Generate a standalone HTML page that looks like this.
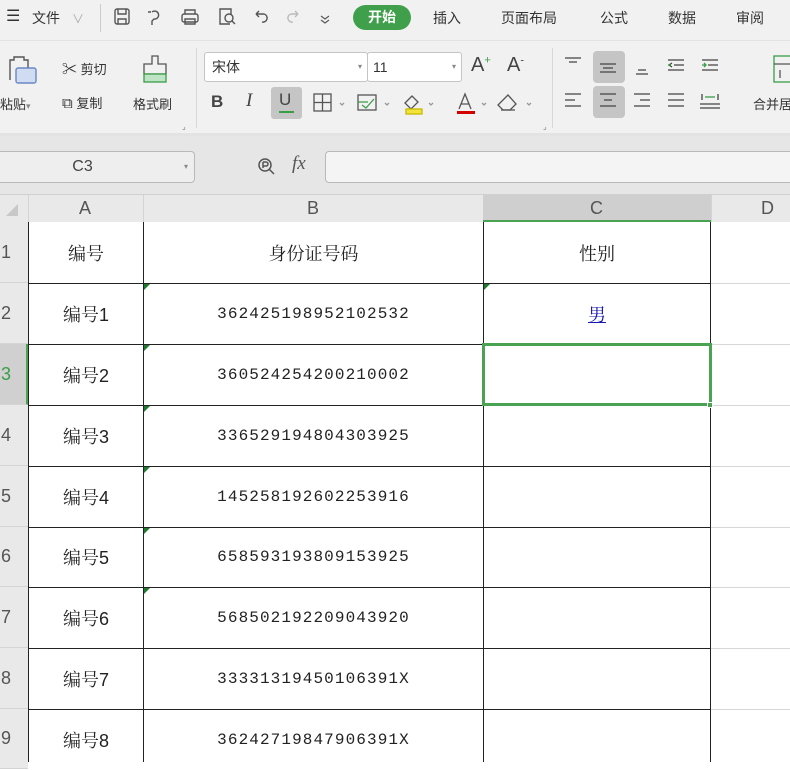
<!DOCTYPE html>
<html><head><meta charset="utf-8"><style>
*{margin:0;padding:0;box-sizing:border-box}
body{width:790px;height:761px;overflow:hidden;background:#fff;font-family:"Liberation Sans","Noto Sans CJK SC",sans-serif;position:relative;color:#333}
.a{position:absolute;white-space:nowrap}
.tab{position:absolute;top:8px;font-size:14px;color:#333}
.ic{position:absolute}
.t13{font-size:13px;color:#333}
.grid div{position:absolute}
.cell{display:flex;align-items:center;justify-content:center;font-size:18px;color:#222;font-family:"Liberation Sans","Noto Serif CJK SC",serif}
.num{font-family:"Liberation Mono",monospace;font-size:16px;letter-spacing:1.1px}
.rh{position:absolute;left:0;width:28px;background:#e9e9e9;border-bottom:1px solid #d4d4d4;font-size:18px;color:#555;display:flex;align-items:center;padding-left:1px}
.tri{position:absolute;width:0;height:0;border-top:6px solid #1e7a2e;border-right:6px solid transparent}
</style></head><body>
<div class="a" style="left:0;top:0;width:790px;height:135px;background:#f1f1f1"></div>
<div class="a" style="left:0;top:40px;width:790px;height:1px;background:#e2e2e2"></div>
<div class="a" style="left:0;top:133px;width:790px;height:3px;background:#e3e3e3"></div>
<div class="tab" style="left:6px;top:6px;font-size:16px">☰</div>
<div class="tab" style="left:32px">文件</div>
<div class="tab" style="left:72px;color:#aaa;font-size:12px;top:10px">∨</div>
<div class="a" style="left:100px;top:4px;width:1px;height:28px;background:#ccc"></div>
<svg class="ic" style="left:112px;top:6px" width="240" height="22" viewBox="0 0 240 22" fill="none" stroke="#555" stroke-width="1.4">
<rect x="3" y="3" width="14" height="15" rx="2"/><path d="M6 3v5h8V3M6 18v-5h8v5"/>
<path d="M40 6a4 4 0 1 1 2 7l-2 2v4M36 6h3"/>
<rect x="70" y="8" width="16" height="8" rx="2"/><path d="M73 8V4h10v4M73 13h10v5H73z"/>
<path d="M118 3h-10v15h10M110 3h9v6"/><circle cx="117" cy="12" r="4"/><path d="M120 15l3 3"/>
<path d="M144 8h8a4 4 0 1 1-2 8M144 8l3-3M144 8l3 3"/>
<path stroke="#bbb" d="M186 8h-7a4 4 0 1 0 2 8M186 8l-3-3M186 8l-3 3"/>
<path d="M209 10l4 3 4-3M209 14l4 3 4-3" stroke-width="1.1"/>
</svg>
<div class="a" style="left:353px;top:5px;width:58px;height:25px;border-radius:13px;background:#3f9f4a;color:#fff;font-size:14px;font-weight:bold;text-align:center;line-height:25px">开始</div>
<div class="tab" style="left:433px">插入</div>
<div class="tab" style="left:501px">页面布局</div>
<div class="tab" style="left:600px">公式</div>
<div class="tab" style="left:668px">数据</div>
<div class="tab" style="left:736px">审阅</div>
<svg class="ic" style="left:4px;top:52px" width="36" height="36" viewBox="0 0 36 36" fill="none" stroke="#555" stroke-width="1.4"><path d="M6 28V8h4V5h10v3h4v8"/><rect x="12" y="16" width="20" height="15" rx="2" fill="#cfdcf2" stroke="#6a88c6"/></svg>
<div class="a t13" style="left:0;top:94px">粘贴<span style="font-size:9px;color:#888">▾</span></div>
<div class="a t13" style="left:62px;top:58px"><span style="font-size:15px">✂</span> 剪切</div>
<div class="a t13" style="left:62px;top:93px"><span style="font-size:15px">⧉</span> 复制</div>
<svg class="ic" style="left:140px;top:52px" width="30" height="36" viewBox="0 0 30 36" fill="none" stroke="#555" stroke-width="1.3"><path d="M12 4h6v8h8v10H4V12h8z"/><rect x="4" y="22" width="22" height="8" fill="#bfe3c5" stroke="#3a9d48"/></svg>
<div class="a t13" style="left:133px;top:94px">格式刷</div>
<div class="a" style="left:182px;top:122px;font-size:8px;color:#777">⌟</div>
<div class="a" style="left:196px;top:48px;width:1px;height:80px;background:#d8d8d8"></div>
<div class="a" style="left:204px;top:52px;width:164px;height:30px;border:1px solid #c4c4c4;border-radius:3px;background:#fff;font-size:14px;line-height:28px;padding-left:7px">宋体<span style="position:absolute;right:5px;font-size:8px;color:#888">▾</span></div>
<div class="a" style="left:367px;top:52px;width:95px;height:30px;border:1px solid #c4c4c4;border-radius:3px;background:#fff;font-size:14px;line-height:28px;padding-left:5px">11<span style="position:absolute;right:5px;font-size:8px;color:#888">▾</span></div>
<div class="a" style="left:471px;top:54px;font-size:20px;color:#444">A<sup style="font-size:11px;color:#3a9d48">+</sup></div>
<div class="a" style="left:507px;top:54px;font-size:20px;color:#444">A<sup style="font-size:11px">-</sup></div>
<div class="a" style="left:211px;top:92px;font-size:17px;font-weight:bold;color:#444">B</div>
<div class="a" style="left:246px;top:90px;font-size:19px;font-style:italic;font-family:'Liberation Serif',serif;color:#444">I</div>
<div class="a" style="left:271px;top:87px;width:31px;height:32px;background:#c5c5c5;border-radius:3px"></div>
<div class="a" style="left:279px;top:90px;font-size:17px;color:#444">U</div>
<div class="a" style="left:279px;top:111px;width:15px;height:2px;background:#3a9d48"></div>
<svg class="ic" style="left:312px;top:90px" width="230" height="28" viewBox="0 0 230 28" fill="none" stroke="#555" stroke-width="1.3">
<rect x="2" y="4" width="17" height="17"/><path d="M2 12.5h17M10.5 4v17"/><path d="M28 13l2 2 2-2" stroke="#999"/>
<rect x="46" y="5" width="18" height="15"/><path d="M46 12h10M50 15l4 3 8-9" stroke="#3a9d48"/><path d="M73 13l2 2 2-2" stroke="#999"/>
<path d="M100 6l-7 7 6 6 7-7z"/><rect x="94" y="19" width="16" height="5" fill="#f1e43c" stroke="#c8b900"/><path d="M117 13l2 2 2-2" stroke="#999"/>
<path d="M147 19l6-15 6 15M149 14h8"/><rect x="145" y="21" width="18" height="3" fill="#d40000" stroke="none"/><path d="M170 13l2 2 2-2" stroke="#999"/>
<path d="M196 5l-10 10 5 5h7l6-6z"/><path d="M189 20h14"/><path d="M215 13l2 2 2-2" stroke="#999"/>
</svg>
<div class="a" style="left:543px;top:122px;font-size:8px;color:#777">⌟</div>
<div class="a" style="left:552px;top:48px;width:1px;height:80px;background:#d8d8d8"></div>
<div class="a" style="left:593px;top:51px;width:32px;height:32px;background:#c5c5c5;border-radius:4px"></div>
<div class="a" style="left:593px;top:86px;width:32px;height:32px;background:#c5c5c5;border-radius:4px"></div>
<svg class="ic" style="left:560px;top:52px" width="170" height="66" viewBox="0 0 170 66" fill="none" stroke="#444" stroke-width="1.3">
<path d="M5 6h16M9 10h8"/><path d="M40 12h16M43 16h10M40 20h16"/><path d="M76 22h12M78 18h8"/>
<path d="M108 8h16M114 13h10M108 18h16M112 11l-3 2 3 2" /><path d="M108 13h3" stroke="#3a9d48"/>
<path d="M142 8h16M148 13h10M142 18h16"/><path d="M142 13h4M144 11l2 2-2 2" stroke="#3a9d48"/>
<path d="M5 42h16M5 48h10M5 54h16"/><path d="M40 42h16M44 48h8M40 54h16"/><path d="M74 42h16M80 48h10M74 54h16"/>
<path d="M108 42h16M108 48h16M108 54h16"/><path d="M140 52h20M140 56h20M142 42v6M158 42v6" /><path d="M145 45h10" stroke="#3a9d48"/>
</svg>
<svg class="ic" style="left:770px;top:54px" width="20" height="32" viewBox="0 0 20 32" fill="none" stroke="#3a9d48" stroke-width="1.3"><rect x="4" y="2" width="22" height="26"/><path d="M4 10h22M10 16v8" stroke="#555"/></svg>
<div class="a t13" style="left:753px;top:94px">合并居</div>
<div class="a" style="left:0;top:136px;width:790px;height:58px;background:#e6e6e6"></div>
<div class="a" style="left:-5px;top:151px;width:200px;height:32px;border:1px solid #b9b9b9;border-radius:4px;background:#eeeeee;font-size:16px;color:#444;text-align:center;line-height:30px;padding-right:25px">C3<span style="position:absolute;right:6px;font-size:8px;color:#888">▾</span></div>
<svg class="ic" style="left:256px;top:156px" width="22" height="22" viewBox="0 0 22 22" fill="none" stroke="#555" stroke-width="1.5"><circle cx="9" cy="9" r="6"/><path d="M13 13l5 5M7 6v6M7 6h3a2 2 0 0 1 0 4H7"/></svg>
<div class="a" style="left:292px;top:153px;font-size:19px;font-style:italic;font-family:'Liberation Serif',serif;color:#555">fx</div>
<div class="a" style="left:325px;top:151px;width:480px;height:32px;border:1px solid #b9b9b9;border-radius:4px;background:#f4f4f4"></div>
<div class="a" style="left:0;top:194px;width:790px;height:28px;background:#e9e9e9;border-top:1px solid #d0d0d0"></div>
<div class="a" style="left:6px;top:204px;width:0;height:0;border-bottom:12px solid #c8c8c8;border-left:12px solid transparent"></div>
<div class="a" style="left:483px;top:195px;width:228px;height:27px;background:#cfcfcf"></div>
<div class="a" style="left:483px;top:220px;width:228px;height:2px;background:#4aa352"></div>
<div class="a" style="left:28px;top:195px;width:1px;height:27px;background:#d4d4d4"></div>
<div class="a" style="left:143px;top:195px;width:1px;height:27px;background:#d4d4d4"></div>
<div class="a" style="left:711px;top:195px;width:1px;height:27px;background:#d4d4d4"></div>
<div class="a" style="left:79px;top:198px;font-size:18px;color:#555">A</div>
<div class="a" style="left:307px;top:198px;font-size:18px;color:#555">B</div>
<div class="a" style="left:590px;top:198px;font-size:18px;color:#555">C</div>
<div class="a" style="left:761px;top:198px;font-size:18px;color:#555">D</div>
<div class="rh" style="top:222px;height:61px">1</div>
<div class="rh" style="top:283px;height:61px">2</div>
<div class="rh" style="top:344px;height:61px;background:#d0d0d0;color:#3a9d48;border-right:2px solid #4aa352">3</div>
<div class="rh" style="top:405px;height:61px">4</div>
<div class="rh" style="top:466px;height:61px">5</div>
<div class="rh" style="top:527px;height:60px">6</div>
<div class="rh" style="top:587px;height:61px">7</div>
<div class="rh" style="top:648px;height:61px">8</div>
<div class="rh" style="top:709px;height:60px">9</div>
<div class="a" style="left:711px;top:283px;width:79px;height:1px;background:#d8d8d8"></div>
<div class="a" style="left:711px;top:344px;width:79px;height:1px;background:#d8d8d8"></div>
<div class="a" style="left:711px;top:405px;width:79px;height:1px;background:#d8d8d8"></div>
<div class="a" style="left:711px;top:466px;width:79px;height:1px;background:#d8d8d8"></div>
<div class="a" style="left:711px;top:527px;width:79px;height:1px;background:#d8d8d8"></div>
<div class="a" style="left:711px;top:587px;width:79px;height:1px;background:#d8d8d8"></div>
<div class="a" style="left:711px;top:648px;width:79px;height:1px;background:#d8d8d8"></div>
<div class="a" style="left:711px;top:709px;width:79px;height:1px;background:#d8d8d8"></div>
<div class="a" style="left:28px;top:222px;width:1px;height:540px;background:#222"></div>
<div class="a" style="left:143px;top:222px;width:1px;height:540px;background:#222"></div>
<div class="a" style="left:483px;top:222px;width:1px;height:540px;background:#222"></div>
<div class="a" style="left:710px;top:222px;width:1px;height:540px;background:#222"></div>
<div class="a" style="left:28px;top:283px;width:683px;height:1px;background:#222"></div>
<div class="a" style="left:28px;top:344px;width:683px;height:1px;background:#222"></div>
<div class="a" style="left:28px;top:405px;width:683px;height:1px;background:#222"></div>
<div class="a" style="left:28px;top:466px;width:683px;height:1px;background:#222"></div>
<div class="a" style="left:28px;top:527px;width:683px;height:1px;background:#222"></div>
<div class="a" style="left:28px;top:587px;width:683px;height:1px;background:#222"></div>
<div class="a" style="left:28px;top:648px;width:683px;height:1px;background:#222"></div>
<div class="a" style="left:28px;top:709px;width:683px;height:1px;background:#222"></div>
<div class="tri" style="left:144px;top:284px"></div>
<div class="tri" style="left:484px;top:284px"></div>
<div class="tri" style="left:144px;top:345px"></div>
<div class="tri" style="left:144px;top:406px"></div>
<div class="tri" style="left:144px;top:467px"></div>
<div class="tri" style="left:144px;top:528px"></div>
<div class="tri" style="left:144px;top:588px"></div>
<div class="grid">
<div class="cell" style="left:29px;top:222px;width:114px;height:61px">编号</div>
<div class="cell" style="left:144px;top:222px;width:339px;height:61px">身份证号码</div>
<div class="cell" style="left:484px;top:222px;width:226px;height:61px">性别</div>
<div class="cell" style="left:29px;top:283px;width:114px;height:61px">编号1</div>
<div class="cell num" style="left:144px;top:283px;width:339px;height:61px">362425198952102532</div>
<div class="cell" style="left:484px;top:283px;width:226px;height:61px;color:#1a1ab0;text-decoration:underline">男</div>
<div class="cell" style="left:29px;top:344px;width:114px;height:61px">编号2</div>
<div class="cell num" style="left:144px;top:344px;width:339px;height:61px">360524254200210002</div>
<div class="cell" style="left:29px;top:405px;width:114px;height:61px">编号3</div>
<div class="cell num" style="left:144px;top:405px;width:339px;height:61px">336529194804303925</div>
<div class="cell" style="left:29px;top:466px;width:114px;height:61px">编号4</div>
<div class="cell num" style="left:144px;top:466px;width:339px;height:61px">145258192602253916</div>
<div class="cell" style="left:29px;top:527px;width:114px;height:60px">编号5</div>
<div class="cell num" style="left:144px;top:527px;width:339px;height:60px">658593193809153925</div>
<div class="cell" style="left:29px;top:587px;width:114px;height:61px">编号6</div>
<div class="cell num" style="left:144px;top:587px;width:339px;height:61px">568502192209043920</div>
<div class="cell" style="left:29px;top:648px;width:114px;height:61px">编号7</div>
<div class="cell num" style="left:144px;top:648px;width:339px;height:61px">33331319450106391X</div>
<div class="cell" style="left:29px;top:709px;width:114px;height:61px">编号8</div>
<div class="cell num" style="left:144px;top:709px;width:339px;height:61px">36242719847906391X</div>
</div>
<div class="a" style="left:482px;top:343px;width:230px;height:63px;border:3px solid #4aa352"></div>
<div class="a" style="left:707px;top:402px;width:6px;height:6px;background:#4aa352;border:1px solid #fff"></div>
</body></html>
